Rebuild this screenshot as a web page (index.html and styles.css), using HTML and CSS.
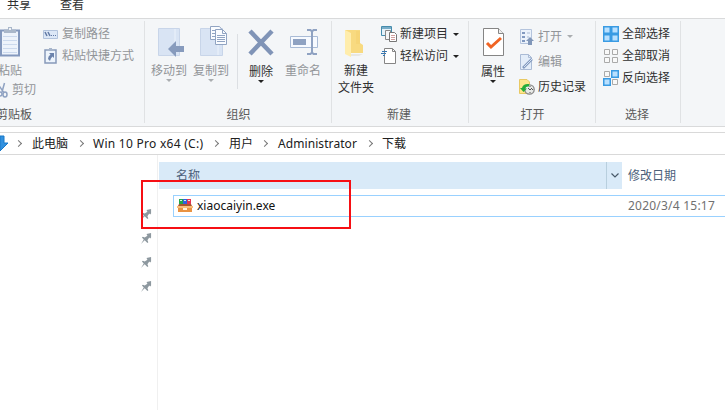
FILE: index.html
```html
<!DOCTYPE html>
<html lang="zh-CN">
<head>
<meta charset="utf-8">
<title>下载</title>
<link rel="stylesheet" href="styles.css">
</head>
<body>
<nav class="tabs"><span>共享</span><span>查看</span></nav>
<div class="ribbon">
  <section class="group clipboard">
    <div class="body">
      <div class="paste-col">
        <div class="big disabled"><svg width="36" height="34" viewBox="0 0 36 34"><path d="M9 4.500H27V29.500H9Z" fill="#edf3fb" stroke="#8398bd" stroke-width="2"/><path d="M11 10.500H25M11 14.500H25M11 18.500H25M11 22.500H25M11 26.500H25" stroke="#cbd9ed"/><path d="M12 7V3.500H16V1H20V3.500H24V7Z" fill="#a9b7ca"/><path d="M17 2H19V4H17Z" fill="#eef2f7"/></svg><span>粘贴</span></div>
        <div class="small disabled cut"><svg width="16" height="16" viewBox="0 0 16 16" fill="none" stroke="#8fa2c2" stroke-width="1.500"><path d="M12.500 1 10 10M6 2 12 11"/><circle cx="8" cy="12" r="2"/><ellipse cx="13" cy="12.500" rx="2" ry="2.500"/></svg><span>剪切</span></div>
      </div>
      <div class="list">
        <div class="small disabled"><svg width="16" height="16" viewBox="0 0 16 16"><path d="M.5 4.500H14.500V12.500H.5Z" fill="#dce7f6" stroke="#b2c3dc"/><path d="M2 6 4 10M5 6 7 10" stroke="#6179a5" stroke-width="1.500"/><path d="M8 9H9V10H8ZM10 9H11V10H10ZM12 9H13V10H12Z" fill="#6179a5"/></svg><span>复制路径</span></div>
        <div class="small disabled"><svg width="16" height="16" viewBox="0 0 16 16"><path d="M2 2H13V15H2Z" fill="#edf4fc" stroke="#8799b9" stroke-width="1.500"/><path d="M4 3V1H6V0H9V1H11V3Z" fill="#a7b5cb"/><path d="M6 5H11V10L9.500 8.500Q7.500 10 7 13L5 11Q5 8 7.500 6.500Z" fill="#6c83ac"/></svg><span>粘贴快捷方式</span></div>
      </div>
    </div>
    <h2>剪贴板</h2>
  </section>
  <section class="group organize">
    <div class="body">
      <div class="big disabled"><svg width="36" height="34" viewBox="0 0 36 34"><path d="M7.500 2.500H28.500V29.500H7.500Z" fill="#d9e4f4" stroke="#c8d5e9"/><path d="M24 3V29" stroke="#edf3fb"/><path d="M17 23 25 15V20H33V26H25V31Z" fill="#879bbd"/></svg><span>移动到</span><i class="arrow"></i></div>
      <div class="big disabled"><svg width="36" height="34" viewBox="0 0 36 34"><path d="M7.500 2.500H29.500V29.500H7.500Z" fill="#d9e4f4" stroke="#c8d5e9"/><path d="M25 15V29" stroke="#edf3fb"/><path d="M17.500.5H26.500L28.500 3V13.500H17.500Z" fill="#fafcff" stroke="#91a4c2"/><path d="M22.500 3.500H29.500L33.500 7.500V18.500H22.500Z" fill="#fafcff" stroke="#91a4c2"/><path d="M29.500 3.500V7.500H33.500M19 4.500H22M19 7.500H22M19 10.500H22M24 9.500H32M24 11.500H32M24 13.500H32M24 15.500H32" fill="none" stroke="#91a4c2"/></svg><span>复制到</span><i class="arrow"></i></div>
      <b class="divider"></b>
      <div class="big enabled"><svg width="36" height="34" viewBox="0 0 36 34"><path d="M7 5 29 28M29 5 7 28" stroke="#8094b7" stroke-width="4.500"/></svg><span>删除</span><i class="arrow"></i></div>
      <div class="big disabled"><svg width="36" height="34" viewBox="0 0 36 34"><path d="M5.500 10.500H32.500V21.500H5.500Z" fill="#f7faff" stroke="#a9bbd6"/><path d="M8 13H21V19H8Z" fill="#8fa2c2"/><path d="M22 4H25.500L27 5.500 28.500 4H32M27 5V27M22 28H25.500L27 26.500 28.500 28H32" fill="none" stroke="#8fa2c2" stroke-width="2"/></svg><span>重命名</span></div>
    </div>
    <h2>组织</h2>
  </section>
  <section class="group new">
    <div class="body">
      <div class="big"><svg width="36" height="34" viewBox="0 0 36 34"><path d="M7 4H22V17L25 19V27H11Z" fill="#f8da80"/><path d="M7 4 13 7V31L7 28Z" fill="#ffedac"/><path d="M18 5H22V18H18Z" fill="#f3cf6e" opacity=".5"/><path d="M13 28H25L21 30H13Z" fill="#e8e7e2"/></svg><span>新建<br>文件夹</span></div>
      <div class="list">
        <div class="small"><svg width="16" height="16" viewBox="0 0 16 16"><path d="M.5.5H10.500V9.500H.5Z" fill="#e5f2fa" stroke="#458cad"/><path d="M1 1H10V3H1Z" fill="#77acc7"/><path d="M4.500 4.500H9.500V13.500H4.500Z" fill="#f4f5f6" stroke="#888"/><path d="M8.500 6.500H13.500L15.500 8.500V15.500H8.500Z" fill="#fff" stroke="#777"/><path d="M10 9.500H14M10 11.500H14M10 13.500H14" stroke="#d2a0a0"/></svg><span>新建项目</span><i class="arrow"></i></div>
        <div class="small"><svg width="16" height="16" viewBox="0 0 16 16"><path d="M3.500.5H11.500L14.500 3.500V15.500H3.500Z" fill="#fff" stroke="#858585"/><path d="M11.500.5V3.500H14.500" fill="none" stroke="#858585"/><path d="M1 3.500H6M0 5.500H5M2 7.500H4" stroke="#3477b3" stroke-width="1.200"/></svg><span>轻松访问</span><i class="arrow"></i></div>
      </div>
    </div>
    <h2>新建</h2>
  </section>
  <section class="group open">
    <div class="body">
      <div class="big enabled"><svg width="36" height="34" viewBox="0 0 36 34"><path d="M8.500 2.500H23.500L28.500 7.500V29.500H8.500Z" fill="#fff" stroke="#858585"/><path d="M23.500 2.500V7.500H28.500" fill="#eee" stroke="#858585"/><path d="M12 17 16 21 26 12" fill="none" stroke="#f06424" stroke-width="3"/></svg><span>属性</span><i class="arrow"></i></div>
      <div class="list">
        <div class="small disabled"><svg width="16" height="16" viewBox="0 0 16 16"><path d="M1.500.5H12.500V14.500H1.500Z" fill="#ebf2fb" stroke="#b4c4dd"/><path d="M3 3H6V5H3ZM3 7H6V9H3ZM3 11H6V13H3Z" fill="#8199c0"/><path d="M8 4H11M8 8H10" stroke="#a9bad4"/><path d="M11 8 15 12H13V16H9V12H7Z" fill="#8197b9"/></svg><span>打开</span><i class="arrow"></i></div>
        <div class="small disabled"><svg width="16" height="16" viewBox="0 0 16 16"><path d="M1.500.5H9.500L12.500 3.500V15.500H1.500Z" fill="#e3edf9" stroke="#aabbd5"/><path d="M9.500.5V3.500H12.500" fill="none" stroke="#aabbd5"/><path d="M4 14 13 5" stroke="#839abe" stroke-width="2.500"/><path d="M5 13 13 5" stroke="#d4e1f3"/></svg><span>编辑</span></div>
        <div class="small"><svg width="16" height="16" viewBox="0 0 16 16"><path d="M.5.5H8L10.500 3V14.500H.5Z" fill="#ffe68c" stroke="#e8c964"/><circle cx="10.500" cy="10.500" r="4.700" fill="#e7e9e7" stroke="#888" stroke-width="1.300"/><path d="M11 7V8M13 10.500H14M11 13V14M11 11 13 9M11 11 9 9" stroke="#555"/><path d="M1 9 3 9Q4 4.500 10 5V7.500Q6.500 7 6 9.500H8L4.500 13Z" fill="#27ad38"/></svg><span>历史记录</span></div>
      </div>
    </div>
    <h2>打开</h2>
  </section>
  <section class="group select">
    <div class="body"><div class="list">
      <div class="small"><svg width="16" height="16" viewBox="0 0 16 16"><path d="M.75.75H7.250V7.250H.75ZM8.750.75H15.250V7.250H8.750ZM.75 8.750H7.250V15.250H.75ZM8.750 8.750H15.250V15.250H8.750Z" fill="#b9e0ff" stroke="#3a9be3" stroke-width="1.500"/></svg><span>全部选择</span></div>
      <div class="small"><svg width="16" height="16" viewBox="0 0 16 16"><path d="M1.500 1.500H6.500V6.500H1.500ZM9.500 1.500H14.500V6.500H9.500ZM1.500 9.500H6.500V14.500H1.500ZM9.500 9.500H14.500V14.500H9.500Z" fill="#f9f9f9" stroke="#aaa"/></svg><span>全部取消</span></div>
      <div class="small"><svg width="16" height="16" viewBox="0 0 16 16"><path d="M1.500 1.500H6.500V6.500H1.500ZM9.500 9.500H14.500V14.500H9.500Z" fill="#f9f9f9" stroke="#aaa"/><path d="M8.750.75H15.250V7.250H8.750ZM.75 8.750H7.250V15.250H.75Z" fill="#b9e0ff" stroke="#3a9be3" stroke-width="1.500"/></svg><span>反向选择</span></div>
    </div></div>
    <h2>选择</h2>
  </section>
</div>
<div class="address">
  <svg class="down" width="9" height="17" viewBox="0 0 9 17"><path d="M0 1H4V8H8L0 16Z" fill="#3291df" stroke="#1978c8"/></svg>
  <i class="crumb-arrow"></i><span class="pc">此电脑</span>
  <i class="crumb-arrow"></i><span class="drive">Win 10 Pro x64 (C:)</span>
  <i class="crumb-arrow"></i><span class="users">用户</span>
  <i class="crumb-arrow"></i><span class="admin">Administrator</span>
  <i class="crumb-arrow"></i><span>下载</span>
</div>
<main>
  <aside>
    <svg class="pin" viewBox="0 0 12 12"><path d="M6 1 11 0V5L10 6 9 5 7 8 8 10 7 11 4 8 0 12 3 7 1 5 2 4 4 5 7 3Z"/></svg>
    <svg class="pin" viewBox="0 0 12 12"><path d="M6 1 11 0V5L10 6 9 5 7 8 8 10 7 11 4 8 0 12 3 7 1 5 2 4 4 5 7 3Z"/></svg>
    <svg class="pin" viewBox="0 0 12 12"><path d="M6 1 11 0V5L10 6 9 5 7 8 8 10 7 11 4 8 0 12 3 7 1 5 2 4 4 5 7 3Z"/></svg>
    <svg class="pin" viewBox="0 0 12 12"><path d="M6 1 11 0V5L10 6 9 5 7 8 8 10 7 11 4 8 0 12 3 7 1 5 2 4 4 5 7 3Z"/></svg>
  </aside>
  <div class="files">
    <div class="columns"><span class="name">名称</span><span class="sort"><svg width="8" height="5" viewBox="0 0 8 5"><path d="M.5.5 4 4 7.500.5" fill="none" stroke="#485968" stroke-width="1.200"/></svg></span><span class="modified">修改日期</span></div>
    <div class="file"><svg width="16" height="16" viewBox="0 0 16 16"><path d="M2 1H6V7H2Z" fill="#20a64b"/><path d="M6 1H10V7H6Z" fill="#315fe0"/><path d="M10 1H14V7H10Z" fill="#e33452"/><path d="M3 2.500H5M7 2.500H9M11 2.500H13" stroke="#d7f1e4"/><path d="M1 9H15V14H1Z" fill="#e99343"/><path d="M2 6H14L15 8H1Z" fill="#a9562f"/><path d="M0 8H16V10H0Z" fill="#f9bd79"/><path d="M6 10H10V12H6Z" fill="#fff1dc"/></svg><span class="filename">xiaocaiyin.exe</span><time>2020/3/4 15:17</time></div>
  </div>
</main>
<div class="highlight"></div>
</body>
</html>
```
FILE: styles.css
```css
* { box-sizing: border-box; }
body { margin: 0; width: 725px; height: 410px; overflow: hidden; background: #fff; color: #303030; font: 12px/16px "Noto Sans", "Noto Sans CJK SC", sans-serif; white-space: nowrap; }
svg { display: block; flex: none; }
.tabs { height: 18px; display: flex; gap: 29px; padding-left: 7px; line-height: 10px; }
.ribbon { height: 109px; display: flex; background: #f4f6f8; border-top: 1px solid #d9dadb; border-bottom: 1px solid #d9dadb; }
.group { height: 107px; position: relative; }
.group::after { content: ""; position: absolute; right: 0; top: 2px; width: 1px; height: 102px; background: #e0e2e4; }
.body { display: flex; height: 87px; }
h2 { margin: 0; font: inherit; line-height: 18px; text-align: center; color: #5b5b5b; }
.clipboard { width: 145px; }
.organize { width: 187px; }
.new { width: 137px; }
.open { width: 127px; }
.select { width: 85px; }
.big { width: 42px; display: flex; flex-direction: column; align-items: center; padding-top: 7px; line-height: 17px; text-align: center; flex: none; }
.big > span { padding-top: 2px; }
.disabled { color: #929599; }
.arrow { width: 0; height: 0; border: 3px solid transparent; border-top-color: #222; border-bottom: 0; flex: none; }
.disabled .arrow { border-top-color: #aaadb0; }
.enabled > span { padding-top: 3px; }
.list { display: flex; flex-direction: column; }
.small { display: flex; align-items: center; height: 22px; }
.small > span { margin-left: 3px; }
.small .arrow { margin-left: 5px; }
.paste-col { width: 43px; }
.clipboard .big { margin-left: -11px; height: 62px; }
.clipboard h2 { margin-left: -4px; text-align: left; color: #555; }
.cut { margin-left: -8px; height: 18px; }
.cut span { margin-left: 4px; }
.clipboard .list { padding-top: 4px; }
.organize .body { padding-left: 3px; }
.divider { width: 1px; height: 55px; margin: 15px 2px 0 5px; background: #dcdfe3; }
.new .body { padding-left: 3px; }
.new .list { margin-left: 4px; padding-top: 4px; }
.new h2 { padding-right: 3px; }
.open .body { padding-left: 3px; }
.open .list { margin-left: 5px; padding-top: 5px; }
.open .small { height: 25px; }
.select .body { padding-left: 7px; }
.select .list { padding-top: 4px; }
.select h2 { padding-right: 3px; }
.address { height: 23px; display: flex; align-items: center; margin-top: 5px; border-top: 1px solid #d9d9d9; border-bottom: 1px solid #d9d9d9; color: #202020; }
.down { margin-right: 7px; }
.crumb-arrow { width: 5px; height: 5px; border: solid #777; border-width: 1.500px 1.500px 0 0; transform: rotate(45deg); flex: none; }
.pc { width: 36px; margin: 0 10px 0 11px; }
.drive { width: 111px; margin: 0 9px 0 10px; letter-spacing: .27px; }
.users { width: 24px; margin: 0 9px 0 11px; }
.admin { width: 79px; margin: 0 10px 0 11px; letter-spacing: .08px; }
.address > span:last-child { margin-left: 10px; }
main { display: flex; height: 255px; }
aside { width: 158px; height: 255px; border-right: 1px solid #f0f0f0; padding: 54px 5px 0 0; display: flex; flex-direction: column; align-items: flex-end; gap: 13px; }
aside, .files { flex: none; }
.pin { width: 11px; height: 11px; fill: #8d989f; }
.files { width: 567px; padding-top: 7px; }
.columns { display: flex; align-items: center; height: 27px; margin-left: 1px; color: #4c607a; }
.name, .sort { background: #d9eaf8; height: 27px; line-height: 27px; }
.name { width: 447px; padding-left: 17px; }
.sort { width: 16px; border-left: 1px solid #b8cfde; display: flex; align-items: center; justify-content: center; }
.modified { margin-left: 6px; }
.file { height: 22px; margin: 6px 0 0 15px; display: flex; align-items: center; border: solid #99d1ff; border-width: 1px 0 1px 1px; color: #111; }
.file > svg { margin-left: 3px; }
.filename { width: 80px; margin-left: 4px; }
time { color: #707070; margin-left: 351px; letter-spacing: .22px; }
.highlight { position: absolute; left: 141px; top: 180px; width: 210px; height: 49px; border: 2px solid #f60f14; }
```
